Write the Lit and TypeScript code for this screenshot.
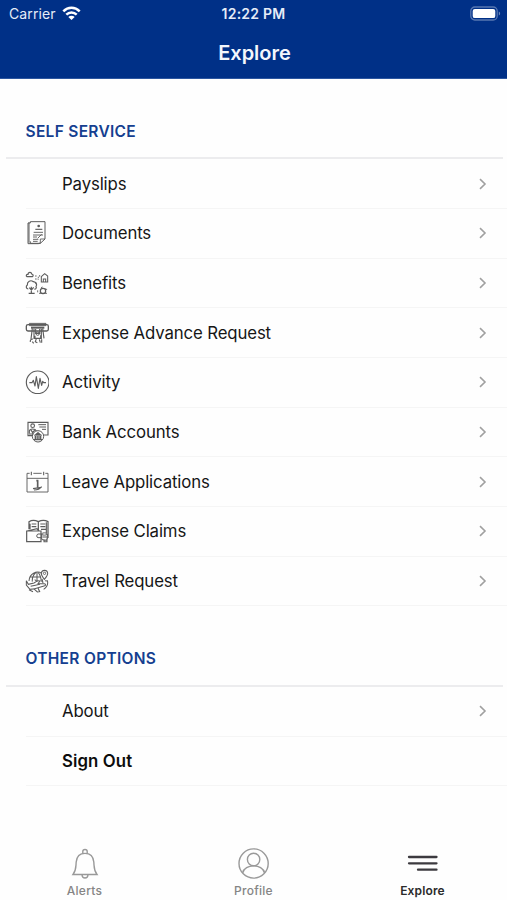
import { LitElement, html, svg, css, nothing } from "lit";
import { customElement, property } from "lit/decorators.js";

const ICONS: Record<string, unknown> = {
  documents: svg`
    <path d="M16 6V2H60V54L46 67H16V61" stroke-width="3"/>
    <path d="M16 6H9V68H40L46 66M12 4V65" stroke-width="3"/>
    <path d="M46 67V54H60" stroke-width="2.6"/>
    <circle cx="41" cy="15" r="4" fill="currentColor" stroke="none"/>
    <path d="M31 25H52" stroke-width="3.4"/>
    <path d="M26 34H54M24 42H54M24 48H36M24 55H40M24 61H38M38 52L50 40" stroke-width="2.8"/>`,
  benefits: svg`
    <path d="M6 17C2 15 4 9 9 10C9 3 19 2 20 9C25 9 26 15 22 17Z" stroke-width="3.6"/>
    <path d="M49 17L59 8L68 15V33H49ZM55 33V24H62V33" stroke-width="3.2"/>
    <path d="M30 15H36M40 17V26M30 24H38M44 12V18M30 36H36" stroke-width="2.6" stroke-dasharray="5 2"/>
    <path d="M19 67V47M13 50L19 57L26 49M10 54C3 54 2 45 7 42C6 31 17 26 25 32C34 33 37 42 33 46C36 52 31 55 28 54M11 67H29" stroke-width="3.6"/>
    <circle cx="54" cy="60" r="8" stroke-width="3.6"/>
    <path d="M42 67H66M48 50L53 48M62 52L66 57M38 58V64" stroke-width="2.6"/>`,
  advance: svg`
    <rect x="4" y="11" width="66" height="19" rx="5" stroke-width="4"/>
    <path d="M13 7H63V14H13Z" fill="currentColor" stroke-width="2"/>
    <path d="M18 20H58" stroke-width="6"/>
    <path d="M22 22L18 54M53 22L57 52M27 24V52H49V24M32 24V37H44V24M30 52V44M47 52V43" stroke-width="3.4"/>
    <circle cx="38" cy="38" r="5" stroke-width="3"/>
    <path d="M24 54C17 54 15 58 16 63M34 53L31 62L37 65M50 55V65M43 55L46 65M22 62L26 67" stroke-width="3.4"/>`,
  activity: svg`
    <circle cx="38" cy="37" r="34" stroke-width="3.4"/>
    <path d="M13 38H21L25 31L30 48L34 20L40 55L45 25L50 46L53 34L56 38H63" stroke-width="3.4" stroke-linejoin="round"/>`,
  bank: svg`
    <path d="M24 47H9V7H69V45H55" stroke-width="3.4"/>
    <circle cx="23" cy="17" r="5.5" stroke-width="3.4"/>
    <path d="M13 40V33C14 25 31 25 34 33M18 30L23 38L29 30M12 42H26" stroke-width="3.4"/>
    <path d="M40 14H63M43 21H63M51 28H63" stroke-width="3"/>
    <circle cx="39" cy="49" r="17" stroke-width="3"/>
    <path d="M28 46L39 37L50 46Z" fill="currentColor" stroke-width="2"/>
    <path d="M31 48V57M36.500 48V57M42 48V57M47 48V57M27 59H51" stroke-width="4"/>`,
  leave: svg`
    <path d="M14 10H6V66H69V10H61M25 10H50M6 25H69" stroke-width="2.8"/>
    <path d="M19 5V16M56 5V16" stroke-width="3.2"/>
    <path d="M38 31V53M34 32H40" stroke-width="5"/>
    <path d="M24 56L49 52M27 60C36 60 45 57 50 50" stroke-width="3.6"/>`,
  claims: svg`
    <path d="M12 31V8C20 3 32 4 40 8C48 4 60 3 69 8V57M40 8V34M15 14V31" stroke-width="3.8"/>
    <path d="M20 15H34M20 23H34M46 15H61M46 23H61M48 31H63M64 10V42" stroke-width="3.4"/>
    <path d="M6 36L36 29L42 36M5 36H48V68H5Z" stroke-width="3.6"/>
    <path d="M50 45H39C34 46 34 56 39 56H49" stroke-width="3"/>
    <ellipse cx="58" cy="45" rx="8" ry="3.500" stroke-width="3"/>
    <path d="M50 45V60C54 65 64 65 67 60V45M53 54H66M57 61V68H66V58" stroke-width="3.2"/>`,
  travel: svg`
    <path d="M50 13C35 3 13 15 12 36M56 61C67 53 70 44 67 34M16 24H46M34 9C23 18 21 27 22 38M39 10C45 16 48 25 49 38M36 10V38" stroke-width="3.1"/>
    <path d="M58 31C52 23 48 17 49 12C51 2 66 1 68 12C69 18 64 24 58 31Z" stroke-width="3.1"/>
    <circle cx="58.500" cy="13" r="3.500" stroke-width="2.6"/>
    <path d="M4 35L10 46L27 42L38 35L45 36L39 44H58C63 45 63 50 57 51L29 59L15 61L4 48Z" stroke-width="3.1"/>
    <path d="M17 52L45 46M26 59L37 69L44 68L39 57M29 32L36 37M60 35L67 36M51 30L54 42M12 62L24 68" stroke-width="3.2"/>`,
};

@customElement("menu-row")
class MenuRow extends LitElement {
  @property() label = "";
  @property() icon = "";
  @property({ type: Boolean }) action = false;

  static styles = css`
    :host { display: block; height: 49.7px; padding-left: 26px; }
    .row {
      height: 100%; box-sizing: border-box; display: flex; align-items: center;
      border-bottom: 1px solid #f5f5f5; padding-right: 20px;
    }
    .icon { width: 24px; height: 24px; margin: 0 13px 0 -1px; color: #5c5c5c; flex: none; }
    .icon svg { display: block; width: 24px; height: 24px; fill: none; stroke: currentColor; }
    .label { flex: 1; font-size: 16.8px; letter-spacing: -0.13px; color: #161616; line-height: 22px; }
    .strong { font-weight: 600; color: #0c0c0c; letter-spacing: 0.1px; }
    .chevron { width: 9px; height: 12px; fill: none; stroke: #a0a0a0; stroke-width: 1.6; }
  `;

  render() {
    return html`<div class="row">
      <div class="icon">${this.icon ? html`<svg viewBox="0 0 72 72">${ICONS[this.icon]}</svg>` : nothing}</div>
      <span class="label ${this.action ? "strong" : ""}">${this.label}</span>
      ${this.action ? nothing : html`<svg class="chevron" viewBox="0 0 9 12"><path d="M2 1.200L7 6L2 10.800"/></svg>`}
    </div>`;
  }
}

@customElement("app-root")
class AppRoot extends LitElement {
  static styles = css`
    :host {
      display: flex; flex-direction: column; width: 507px; height: 900px; overflow: hidden;
      background: #fefefe; font-family: Inter, "Liberation Sans", sans-serif;
    }
    header { height: 79px; flex: none; background: #003087; color: #fff; box-sizing: border-box; border-bottom: 1px solid #2c56a0; }
    .status {
      height: 27px; display: grid; grid-template-columns: 1fr auto 1fr; align-items: center;
      padding: 0 6px 0 9px; font-size: 14px; color: #e6ecf7;
    }
    .carrier { display: flex; align-items: center; gap: 6px; letter-spacing: 0.1px; }
    .wifi { width: 19px; height: 15px; fill: none; stroke: #fff; stroke-width: 2.5; }
    .time { font-weight: 600; font-size: 14px; letter-spacing: 0.25px; margin-left: -3px; }
    .battery { justify-self: end; width: 31px; height: 15px; display: block; }
    .title { text-align: center; font-size: 20px; font-weight: 570; line-height: 28px; padding: 12px 0 0 2px; color: #f4f7fd; }
    .heading {
      box-sizing: border-box; margin: 0 4px 0 6px; padding-left: 19.5px; font-size: 15.5px; font-weight: 600;
      line-height: 20px; color: #153f90; border-bottom: 2px solid #ececee; letter-spacing: 0.3px;
    }
    .first { height: 80.3px; padding-top: 43px; }
    .second { height: 80.6px; padding-top: 43px; }
    nav { margin-top: auto; height: 60px; flex: none; display: grid; grid-template-columns: repeat(3, 1fr); }
    .tab { display: flex; flex-direction: column; align-items: center; font-size: 12px; font-weight: 500; line-height: 16px; color: #858585; letter-spacing: 0.25px; }
    .tab svg { width: 36px; height: 36px; margin: 5px 0 2px; fill: none; stroke: #999; stroke-width: 1.4; }
    .current { color: #2b2b2b; font-weight: 600; letter-spacing: 0.15px; }
    .current svg { stroke: #3c3a3f; stroke-width: 2.3; stroke-linecap: round; }
  `;

  render() {
    const services = [
      ["Payslips", ""], ["Documents", "documents"], ["Benefits", "benefits"],
      ["Expense Advance Request", "advance"], ["Activity", "activity"], ["Bank Accounts", "bank"],
      ["Leave Applications", "leave"], ["Expense Claims", "claims"], ["Travel Request", "travel"],
    ];
    return html`
      <header>
        <div class="status">
          <div class="carrier">Carrier
            <svg class="wifi" viewBox="0 0 19 15">
              <path d="M1.300 5.300C6 .6 13 .6 17.700 5.300M4.300 8.600C7.300 5.700 11.700 5.700 14.700 8.600"/>
              <path d="M6.300 10.900C8.200 9.200 10.800 9.200 12.700 10.900L9.500 14Z" fill="#fff" stroke="none"/>
            </svg>
          </div>
          <span class="time">12:22 PM</span>
          <svg class="battery" viewBox="0 0 31 15">
            <rect x=".8" y="1" width="26.400" height="13" rx="4" fill="none" stroke="#5777b1" stroke-width="1.300"/>
            <rect x="2.700" y="2.900" width="22.600" height="9.200" rx="2.200" fill="#fff"/>
            <path d="M28.800 5.500C30.600 6.200 30.600 8.800 28.800 9.500Z" fill="#6d88bb"/>
          </svg>
        </div>
        <div class="title">Explore</div>
      </header>
      <div class="heading first">SELF SERVICE</div>
      ${services.map(([l, i]) => html`<menu-row label=${l} icon=${i}></menu-row>`)}
      <div class="heading second">OTHER OPTIONS</div>
      <menu-row label="About"></menu-row>
      <menu-row label="Sign Out" action></menu-row>
      <nav>
        <div class="tab">
          <svg viewBox="0 0 36 36"><path d="M6 29.500C9.500 25 8.700 22 9.200 17C9.700 11.500 13 8.400 18 8.400S26.300 11.500 26.800 17C27.300 22 26.500 25 30 29.500ZM15.800 8.500V6.500C15.800 3.800 20.200 3.800 20.200 6.500V8.500M15 30C15.300 34 20.700 34 21 30"/></svg>
          Alerts
        </div>
        <div class="tab">
          <svg viewBox="0 0 36 36"><circle cx="17.600" cy="18.500" r="14.600"/><circle cx="17.600" cy="14.500" r="6.200"/><path d="M6.600 28C8.600 18.500 26.600 18.500 28.600 28"/></svg>
          Profile
        </div>
        <div class="tab current">
          <svg viewBox="0 0 36 36"><path d="M4 12H31.500M4 18.300H31.500M13 24.700H31.500"/></svg>
          Explore
        </div>
      </nav>`;
  }
}
